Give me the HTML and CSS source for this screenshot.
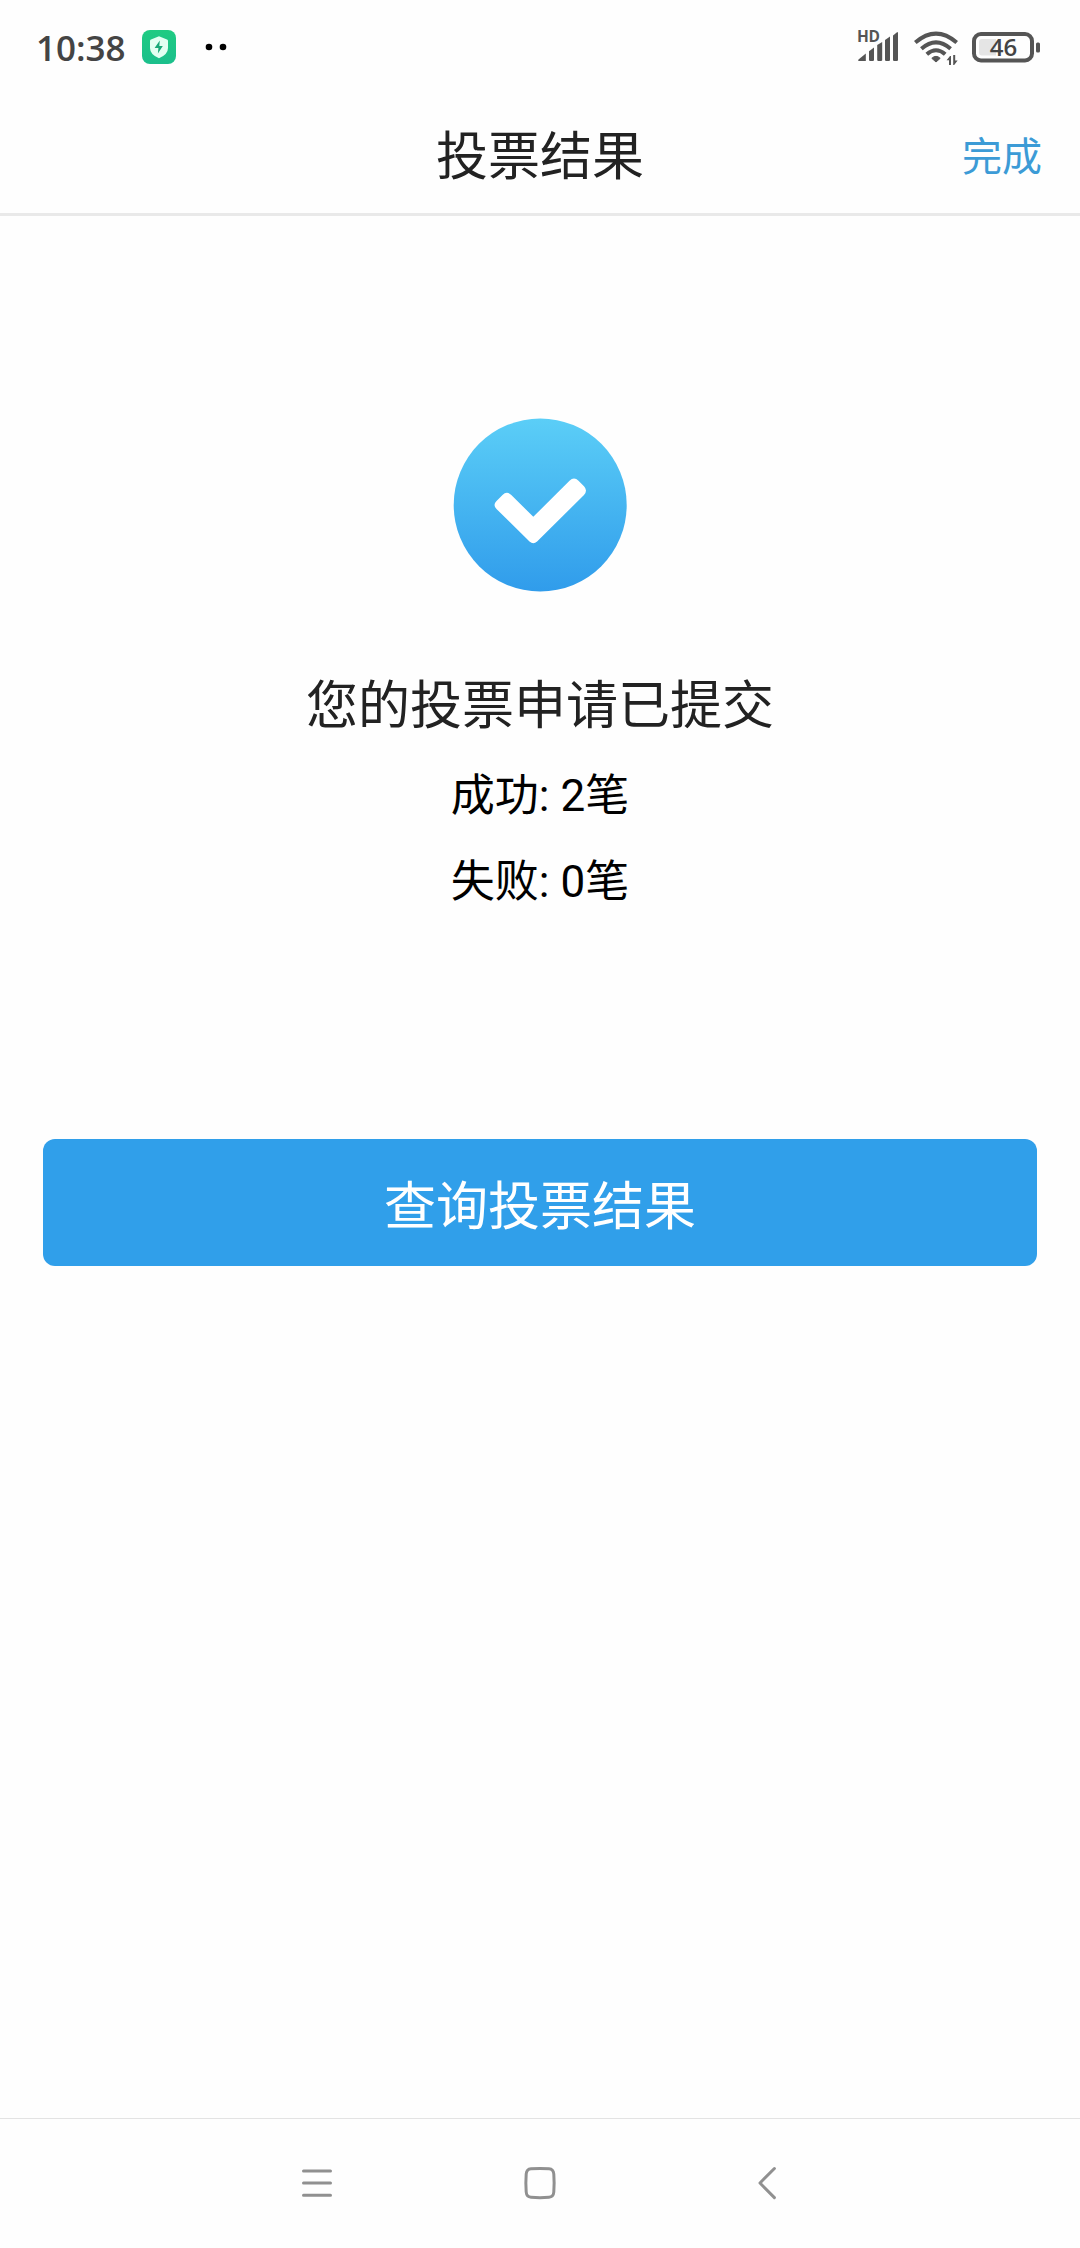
FILE: index.html
```html
<!DOCTYPE html>
<html lang="zh-CN">
<head>
<meta charset="utf-8">
<title>投票结果</title>
<link rel="stylesheet" href="styles.css">
</head>
<body>
<div class="screen">
  <div class="status">
    <span class="time">10:38</span>
    <svg class="shield" width="34" height="34" viewBox="0 0 34 34">
      <defs><linearGradient id="sg" x1="0" y1="0" x2="0" y2="1"><stop offset="0" stop-color="#1fcb82"/><stop offset="1" stop-color="#1bbf8c"/></linearGradient></defs>
      <rect width="34" height="34" rx="8" fill="url(#sg)"/>
      <path d="M17 6.3L25 9.5Q26 9.8 26 11V18Q26 24.5 17 28.2Q8 24.5 8 18V11Q8 9.8 9 9.5Z" fill="#e2fff2"/>
      <path d="M17.8 10.5L12.6 18.1H16.4L15.9 23.6L20.8 16H17.3Z" fill="#18a878"/>
    </svg>
    <svg class="dots" width="22" height="8" viewBox="0 0 22 8"><circle cx="4" cy="4" r="3.3"/><circle cx="18" cy="4" r="3.3"/></svg>
    <svg class="signal" width="46" height="44" viewBox="0 -8 46 44">
      <text class="hd" x="0" y="14" textLength="23">HD</text>
      <g fill="#555"><path d="M1.5 31.5L8.8 25.6V33H2.5Q0.5 33 1.5 31.5Z"/><path d="M12 23.3L17 19.5V32.2L16.2 33H12.8L12 32.2Z"/><path d="M20.2 17L25.2 14V32.2L24.4 33H21L20.2 32.2Z"/><path d="M28 12L33 8.5V32.2L32.2 33H28.8L28 32.2Z"/><path d="M36 7.4L40 4.2H41V32.2L40.2 33H36.8L36 32.2Z"/></g>
    </svg>
    <svg class="wifi" width="44" height="40" viewBox="0 0 44 40">
      <g fill="none" stroke="#555" stroke-width="4"><path d="M1.3 13.6Q22 -4.2 42.7 13.6"/><path d="M7.4 19.8Q22 7 36.6 19.8"/><path d="M12.8 25.3Q22 17.2 31.2 25.3"/></g>
      <path d="M22 33L17.8 29.3Q22 25.4 26.2 29.3Z" fill="#555" stroke="#555" stroke-width="1"/>
      <path d="M37 36V27H36L32.6 31.3H35V36ZM39.2 26V36H40.2L43.6 31.5H41.2V26Z" fill="#555"/>
    </svg>
    <svg class="battery" width="70" height="44" viewBox="0 -6 70 44">
      <rect x="2" y="2" width="58" height="26.5" rx="7" fill="none" stroke="#555" stroke-width="4"/>
      <path d="M10 7H24V23.5H10Q7 23.5 7 20.5V10Q7 7 10 7Z" fill="#e5e5e5"/>
      <rect x="64" y="10.5" width="4" height="10" rx="1.5" fill="#555"/>
      <text class="pct" x="31.5" y="24" text-anchor="middle">46</text>
    </svg>
  </div>
  <header class="header"><span></span><h1>投票结果</h1><a class="done">完成</a></header>
  <main class="main">
    <svg class="check" width="174" height="174" viewBox="0 0 174 174">
      <defs><linearGradient id="cg" x1="0" y1="0" x2="0" y2="1"><stop offset="0" stop-color="#5bcef7"/><stop offset="1" stop-color="#309ceb"/></linearGradient></defs>
      <circle cx="87.2" cy="87" r="86.5" fill="url(#cg)"/>
      <path d="M49.5 77L43.5 83Q39.5 87 43.5 91L76.5 123.5Q80.3 127 84.1 123.5L131 77Q135 72.5 131 68.2L125.5 62.8Q121 58.2 116.5 62.8L80.3 98.8L58.3 77Q53.8 72.6 49.5 77Z" fill="#fff"/>
    </svg>
    <h2>您的投票申请已提交</h2>
    <p>成功: 2笔</p>
    <p>失败: 0笔</p>
    <button class="query">查询投票结果</button>
  </main>
  <nav class="nav">
    <svg width="34" height="34" viewBox="0 0 34 34"><path d="M3.5 5H30.5M3.5 17H30.5M3.5 29.3H30.5"/></svg>
    <svg width="34" height="34" viewBox="0 0 34 34"><path d="M8 2.8Q17 2.1 26 2.8Q30.4 3.2 30.8 8Q31.5 17 30.8 26Q30.4 31 26 31.3Q17 32 8 31.3Q3.6 31 3.2 26Q2.5 17 3.2 8Q3.6 3.2 8 2.8Z"/></svg>
    <svg width="34" height="34" viewBox="0 0 34 34"><path d="M28.4 2.5L14 17L28.4 31.6"/></svg>
  </nav>
</div>
</body>
</html>
```
FILE: styles.css
```css
* { box-sizing: border-box; margin: 0; padding: 0; }
body { background: #fefefe; font-family: Roboto, "Noto Sans CJK SC", sans-serif; }
.screen { width: 1080px; height: 2248px; display: flex; flex-direction: column; }
.status { height: 96px; display: flex; align-items: flex-start; padding-left: 36px; padding-right: 38px; }
.time { width: 106px; margin-top: 23px; font: 600 35px/50px "Open Sans", sans-serif; color: #444; white-space: nowrap; }
.shield { margin-top: 30px; }
.dots { margin: 43px 0 0 29px; }
.signal { margin: 20px 0 0 auto; }
.wifi { margin: 29px 0 0 11px; }
.battery { margin: 26px 0 0 14px; }
.hd { font: 700 15.5px "Open Sans", sans-serif; fill: #555; }
.pct { font: 600 24px "Open Sans", sans-serif; fill: #444; }
.header { height: 120px; display: grid; grid-template-columns: 1fr auto 1fr; align-items: center; padding: 7px 38px 0; border-bottom: 3px solid #e9e9e9; }
h1, h2 { font-size: 52px; line-height: 76px; font-weight: 400; color: #222; }
.done { justify-self: end; font-size: 40px; line-height: 60px; color: #3c9bd6; }
.main { flex: 1; display: flex; flex-direction: column; align-items: center; padding: 202px 43px 0; }
h2 { margin-top: 77px; }
p { font-size: 44px; line-height: 86px; color: #000; }
h2 + p { margin-top: 8px; }
.query { width: 100%; height: 127px; margin-top: 214px; border: 0; border-radius: 12px; background: #309fea; color: #fff; font: 400 52px/76px Roboto, "Noto Sans CJK SC", sans-serif; padding-top: 11px; }
.nav { height: 130px; padding-bottom: 2px; border-top: 1px solid #e3e3e3; display: flex; justify-content: center; align-items: center; gap: 189px; }
.nav svg { fill: none; stroke: #909090; stroke-width: 3; stroke-linecap: round; stroke-linejoin: round; }
```
